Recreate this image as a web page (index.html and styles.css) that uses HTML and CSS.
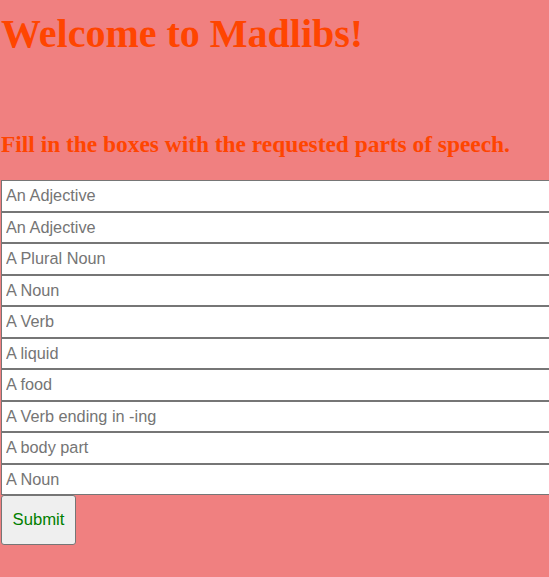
FILE: index.html
```html
<!DOCTYPE html>
<html>
<head>
<meta charset="utf-8">
<title>Madlibs</title>
<link rel="stylesheet" href="styles.css">
</head>
<body>
<div class="page">
  <h1 class="title">Welcome to Madlibs!</h1>
  <h2 class="subtitle">Fill in the boxes with the requested parts of speech.</h2>
  <form class="madlib">
    <input class="field" type="text" placeholder="An Adjective">
    <input class="field" type="text" placeholder="An Adjective">
    <input class="field" type="text" placeholder="A Plural Noun">
    <input class="field" type="text" placeholder="A Noun">
    <input class="field" type="text" placeholder="A Verb">
    <input class="field" type="text" placeholder="A liquid">
    <input class="field" type="text" placeholder="A food">
    <input class="field" type="text" placeholder="A Verb ending in -ing">
    <input class="field" type="text" placeholder="A body part">
    <input class="field" type="text" placeholder="A Noun">
    <button class="submit" type="button">Submit</button>
  </form>
</div>
</body>
</html>
```
FILE: styles.css
```css
html {
  overflow: hidden;
  background: #f08080;
}
body {
  margin: 0;
  background: #f08080;
  font-family: "Liberation Serif", "Times New Roman", serif;
}
.page {
  padding-left: 1px;
}
.title {
  margin: 10px 0 0;
  font-size: 40px;
  font-weight: bold;
  color: #ff4500;
}
.subtitle {
  margin: 74px 0 22px;
  font-size: 23.4px;
  font-weight: bold;
  color: #ff4500;
}
.madlib {
  display: flex;
  flex-direction: column;
  align-items: flex-start;
}
.field {
  display: block;
  box-sizing: border-box;
  width: 560px;
  height: 31.5px;
  margin: 0;
  padding: 0 4px;
  border: 1px solid #767676;
  border-radius: 0;
  background: #fff;
  font-family: "Liberation Sans", Arial, sans-serif;
  font-size: 16.3px;
  color: #333;
  outline: none;
}
.field::placeholder {
  color: #757575;
  opacity: 1;
}
.submit {
  box-sizing: border-box;
  width: 75px;
  height: 50px;
  margin: 0;
  padding: 0;
  border: 1px solid #767676;
  border-radius: 3px;
  background: #efefef;
  font-family: "Liberation Sans", Arial, sans-serif;
  font-size: 16.7px;
  color: #008000;
}
```
